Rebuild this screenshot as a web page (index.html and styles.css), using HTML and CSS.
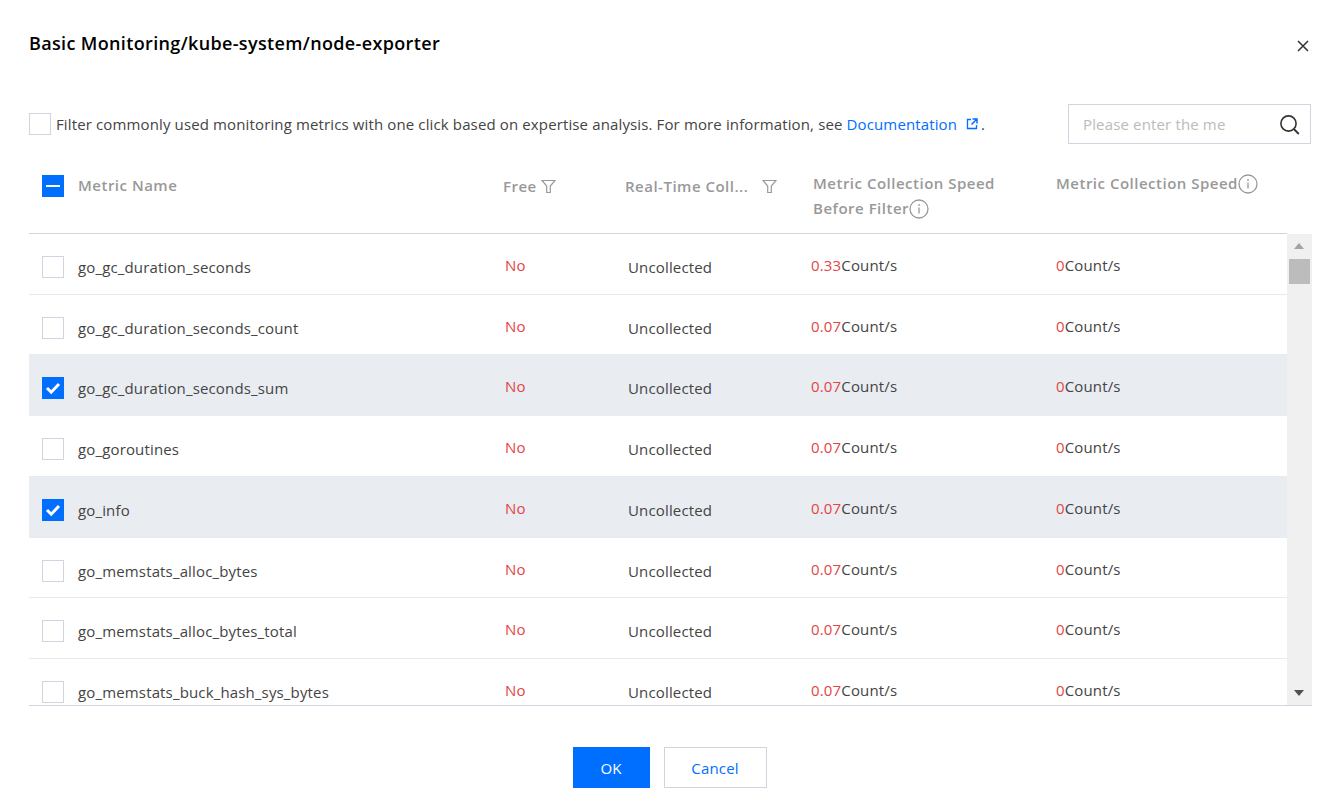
FILE: index.html
```html
<!DOCTYPE html>
<html>
<head>
    <title>Basic Monitoring</title>
    <link rel="stylesheet" href="styles.css">
</head>
<body>
    <div class="dialog">
        <div class="dialog-head">
            <h2>Basic Monitoring/kube-system/node-exporter</h2>
            <svg class="close" width="12" height="12" viewBox="0 0 12 12"><path d="M1 1l10 10M11 1L1 11" stroke="#333" stroke-width="1.5" fill="none"/></svg>
        </div>

        <div class="toolbar">
            <label class="filter-tip">
                <span class="check"></span>
                <span>Filter commonly used monitoring metrics with one click based on expertise analysis. For more information, see <a class="link">Documentation</a><svg class="ext" width="12" height="12" viewBox="0 0 12 12"><path d="M5 1.5H1.5v9h9V7" stroke="#006eff" stroke-width="1.3" fill="none"/><path d="M6.5 1h4.5v4.5M11 1L5.5 6.5" stroke="#006eff" stroke-width="1.5" fill="none"/></svg>.</span>
            </label>
            <div class="search">
                <span class="placeholder">Please enter the me</span>
                <svg width="21" height="21" viewBox="0 0 21 21"><circle cx="9.5" cy="9.5" r="7.6" stroke="#333" stroke-width="1.6" fill="none"/><path d="M14.8 15l5 5" stroke="#333" stroke-width="1.8" fill="none"/></svg>
            </div>
        </div>

        <div class="table-head row-grid">
            <div class="cell-check"><span class="check minus"></span></div>
            <div class="th th-name">Metric Name</div>
            <div class="th th-free">Free<svg class="funnel" width="15" height="15" viewBox="0 0 15 15"><path d="M1 1.5h13L9.3 7v6.5H5.7V7z" stroke="#999" stroke-width="1.2" fill="none"/></svg></div>
            <div class="th th-real">Real-Time Coll...<svg class="funnel" width="15" height="15" viewBox="0 0 15 15"><path d="M1 1.5h13L9.3 7v6.5H5.7V7z" stroke="#999" stroke-width="1.2" fill="none"/></svg></div>
            <div class="th th-speed">Metric Collection Speed<br>Before Filter<svg class="info" width="20" height="20" viewBox="0 0 20 20"><circle cx="10" cy="10" r="9" stroke="#999" stroke-width="1.3" fill="none"/><path d="M10 8.5v6M10 5v2" stroke="#999" stroke-width="1.3"/></svg></div>
            <div class="th th-speed">Metric Collection Speed<svg class="info" width="20" height="20" viewBox="0 0 20 20"><circle cx="10" cy="10" r="9" stroke="#999" stroke-width="1.3" fill="none"/><path d="M10 8.5v6M10 5v2" stroke="#999" stroke-width="1.3"/></svg></div>
        </div>

        <div class="table-body">
            <div class="rows">
                <div class="row row-grid">
                    <div class="cell-check"><span class="check"></span></div>
                    <div class="name">go_gc_duration_seconds</div>
                    <div class="free">No</div>
                    <div class="status">Uncollected</div>
                    <div class="speed"><em>0.33</em>Count/s</div>
                    <div class="speed"><em>0</em>Count/s</div>
                </div>
                <div class="row row-grid">
                    <div class="cell-check"><span class="check"></span></div>
                    <div class="name">go_gc_duration_seconds_count</div>
                    <div class="free">No</div>
                    <div class="status">Uncollected</div>
                    <div class="speed"><em>0.07</em>Count/s</div>
                    <div class="speed"><em>0</em>Count/s</div>
                </div>
                <div class="row row-grid selected">
                    <div class="cell-check"><span class="check checked"><svg width="22" height="22" viewBox="0 0 22 22"><path d="M5 11l4.2 4.2L17 7" stroke="#fff" stroke-width="3" fill="none"/></svg></span></div>
                    <div class="name">go_gc_duration_seconds_sum</div>
                    <div class="free">No</div>
                    <div class="status">Uncollected</div>
                    <div class="speed"><em>0.07</em>Count/s</div>
                    <div class="speed"><em>0</em>Count/s</div>
                </div>
                <div class="row row-grid">
                    <div class="cell-check"><span class="check"></span></div>
                    <div class="name">go_goroutines</div>
                    <div class="free">No</div>
                    <div class="status">Uncollected</div>
                    <div class="speed"><em>0.07</em>Count/s</div>
                    <div class="speed"><em>0</em>Count/s</div>
                </div>
                <div class="row row-grid selected">
                    <div class="cell-check"><span class="check checked"><svg width="22" height="22" viewBox="0 0 22 22"><path d="M5 11l4.2 4.2L17 7" stroke="#fff" stroke-width="3" fill="none"/></svg></span></div>
                    <div class="name">go_info</div>
                    <div class="free">No</div>
                    <div class="status">Uncollected</div>
                    <div class="speed"><em>0.07</em>Count/s</div>
                    <div class="speed"><em>0</em>Count/s</div>
                </div>
                <div class="row row-grid">
                    <div class="cell-check"><span class="check"></span></div>
                    <div class="name">go_memstats_alloc_bytes</div>
                    <div class="free">No</div>
                    <div class="status">Uncollected</div>
                    <div class="speed"><em>0.07</em>Count/s</div>
                    <div class="speed"><em>0</em>Count/s</div>
                </div>
                <div class="row row-grid">
                    <div class="cell-check"><span class="check"></span></div>
                    <div class="name">go_memstats_alloc_bytes_total</div>
                    <div class="free">No</div>
                    <div class="status">Uncollected</div>
                    <div class="speed"><em>0.07</em>Count/s</div>
                    <div class="speed"><em>0</em>Count/s</div>
                </div>
                <div class="row row-grid">
                    <div class="cell-check"><span class="check"></span></div>
                    <div class="name">go_memstats_buck_hash_sys_bytes</div>
                    <div class="free">No</div>
                    <div class="status">Uncollected</div>
                    <div class="speed"><em>0.07</em>Count/s</div>
                    <div class="speed"><em>0</em>Count/s</div>
                </div>
            </div>
            <div class="scrollbar">
                <span class="arrow-up"></span>
                <span class="thumb"></span>
                <span class="arrow-down"></span>
            </div>
        </div>

        <div class="dialog-foot">
            <button class="btn primary">OK</button>
            <button class="btn">Cancel</button>
        </div>
    </div>
</body>
</html>
```

FILE: styles.css
```css
body {
    margin: 0;
    background: #fff;
    font-family: "Open Sans", "Noto Sans", Arial, sans-serif;
    font-size: 15px;
    letter-spacing: 0.15px;
    color: #444;
}
.dialog {
    width: 1283px;
    height: 810px;
    padding-left: 29px;
    overflow: hidden;
}
.dialog-head {
    display: flex;
    justify-content: space-between;
    align-items: center;
    height: 24px;
    padding-top: 31px;
}
.dialog-head h2 {
    margin: 0;
    font-size: 18px;
    font-weight: 600;
    letter-spacing: 0.35px;
    color: #000;
}
.close {
    margin-top: 5px;
    margin-right: 3px;
}
.toolbar {
    display: flex;
    justify-content: space-between;
    align-items: center;
    height: 40px;
    margin-top: 49px;
}
.filter-tip {
    display: flex;
    align-items: center;
    gap: 5px;
    letter-spacing: 0.13px;
}
.link {
    color: #006eff;
}
.ext {
    margin: 0 3px 0 9px;
}
.search {
    box-sizing: border-box;
    display: flex;
    justify-content: space-between;
    align-items: center;
    width: 243px;
    height: 40px;
    margin-right: 1px;
    padding: 0 10px 0 14px;
    border: 1px solid #cfd5de;
}
.placeholder {
    color: #bbb;
}
.check {
    box-sizing: border-box;
    display: block;
    width: 22px;
    height: 22px;
    background: #fff;
    border: 1px solid #cfd5de;
}
.check.checked {
    background: #006eff;
    border: 0;
}
.check.checked svg {
    display: block;
}
.check.minus {
    border: 0;
    background: #006eff;
    position: relative;
}
.check.minus::after {
    content: "";
    position: absolute;
    left: 4px;
    top: 10px;
    width: 14px;
    height: 2.5px;
    background: #fff;
}
.row-grid {
    display: grid;
    grid-template-columns: 49px 425px 122px 188px 243px 1fr;
    align-items: center;
}
.cell-check {
    padding-left: 13px;
}
.table-head {
    box-sizing: border-box;
    width: 1258px;
    height: 90px;
    border-bottom: 1px solid #cfd5de;
    font-weight: 600;
    color: #999;
    letter-spacing: 0.5px;
}
.table-head .cell-check {
    margin-bottom: 6px;
}
.th {
    margin-bottom: 8px;
}
.th-free, .th-real {
    margin-bottom: 6px;
}
.th-speed {
    align-self: start;
    margin-top: 27px;
    line-height: 25px;
}
.funnel {
    vertical-align: -2px;
    margin-left: 4px;
}
.th-real .funnel {
    margin-left: 14px;
}
.info {
    vertical-align: -5px;
}
.table-body {
    display: flex;
    height: 471px;
    width: 1283px;
    border-bottom: 1px solid #cfd5de;
    overflow: hidden;
}
.rows {
    width: 1258px;
}
.row {
    box-sizing: border-box;
    height: 60.75px;
    padding-top: 6px;
    border-bottom: 1px solid #e7eaef;
}
.row:first-child {
    height: 60.7px;
}
.row.selected {
    background: #e9edf2;
}
.free, .speed {
    margin-bottom: 4px;
}
.free {
    padding-left: 2px;
    color: #e54545;
}
.status {
    padding-left: 3px;
}
.speed {
    margin-left: -2px;
}
.speed:last-child {
    margin-left: 0;
}
.speed em {
    font-style: normal;
    color: #e54545;
}
.scrollbar {
    position: relative;
    width: 25px;
    background: #f0f0f0;
}
.thumb {
    position: absolute;
    left: 2px;
    top: 25px;
    width: 21px;
    height: 25px;
    background: #bcbcbc;
}
.arrow-up, .arrow-down {
    position: absolute;
    left: 7px;
    width: 0;
    height: 0;
    border-left: 5.5px solid transparent;
    border-right: 5.5px solid transparent;
}
.arrow-up {
    top: 9px;
    border-bottom: 6px solid #a3a3a3;
}
.arrow-down {
    bottom: 9px;
    border-top: 6px solid #505050;
}
.dialog-foot {
    display: flex;
    justify-content: center;
    gap: 14px;
    margin-top: 41px;
    padding-right: 2px;
}
.btn {
    box-sizing: border-box;
    height: 41px;
    width: 103px;
    background: #fff;
    border: 1px solid #cfd5de;
    color: #006eff;
    font-family: inherit;
    font-size: 15px;
    letter-spacing: inherit;
    cursor: pointer;
}
.btn.primary {
    width: 77px;
    background: #006eff;
    border: 0;
    color: #fff;
}
```
